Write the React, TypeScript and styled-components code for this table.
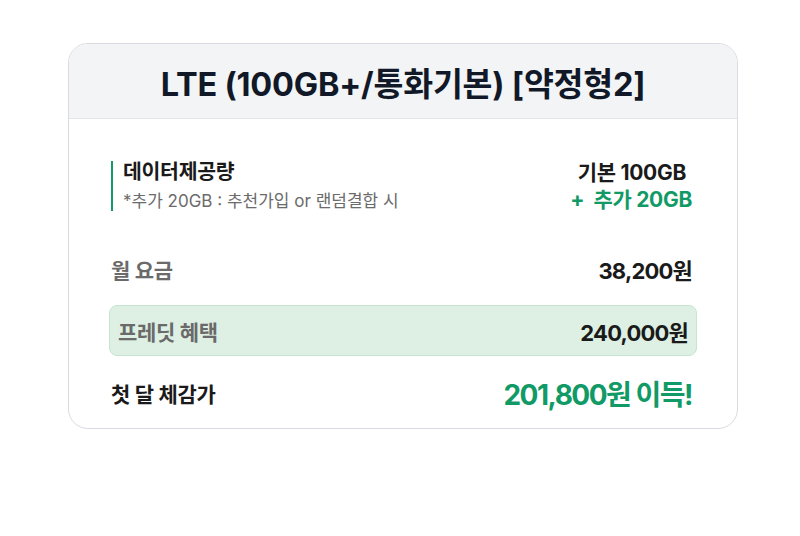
import React from "react";
import styled, { createGlobalStyle } from "styled-components";

const GlobalStyle = createGlobalStyle`
  *, *::before, *::after {
    box-sizing: border-box;
  }
  body {
    margin: 0;
    background: #ffffff;
    font-family: Inter, "Noto Sans CJK KR", sans-serif;
  }
`;

const Page = styled.div`
  padding: 43px 62px 0 68px;
`;

const Card = styled.div`
  border: 1px solid #d9dbe0;
  border-radius: 20px;
  overflow: hidden;
  background: #ffffff;
`;

const Header = styled.div`
  height: 75px;
  display: flex;
  align-items: center;
  justify-content: center;
  background: #f3f4f6;
  border-bottom: 1px solid #e2e4e8;
`;

const Title = styled.h1`
  margin: 0;
  font-size: 32.5px;
  font-weight: 700;
  letter-spacing: -0.2px;
  color: #111827;
`;

const Body = styled.div`
  padding: 41px 40px 8px;
  display: flex;
  flex-direction: column;
`;

const Row = styled.div<{ $highlight?: boolean; $height: number; $space?: number }>`
  display: flex;
  align-items: center;
  justify-content: space-between;
  height: ${(p) => p.$height}px;
  margin-top: ${(p) => p.$space ?? 0}px;
  padding: ${(p) => (p.$highlight ? "0 8px 0 8px" : "0 4px 0 1px")};
  background: ${(p) => (p.$highlight ? "#ddf0e3" : "transparent")};
  border: 1px solid ${(p) => (p.$highlight ? "#c6e5d0" : "transparent")};
  border-radius: 8px;
`;

const DataInfo = styled.div`
  border-left: 2px solid #119a66;
  padding-left: 10px;
  display: flex;
  flex-direction: column;
  gap: 8px;
`;

const DataTitle = styled.div`
  font-size: 20.5px;
  line-height: 22px;
  font-weight: 700;
  color: #1a1a1a;
  letter-spacing: -0.3px;
`;

const DataNote = styled.div`
  font-size: 17px;
  line-height: 20px;
  color: #6b6b6b;
`;

const DataValue = styled.div`
  display: flex;
  flex-direction: column;
  align-items: flex-end;
  gap: 3px;
  font-size: 21px;
  line-height: 24px;
  font-weight: 700;
  letter-spacing: -0.3px;
`;

const Base = styled.span`
  color: #1a1a1a;
  padding-right: 6px;
`;

const Extra = styled.span`
  color: #119a66;
  white-space: pre;
`;

const Label = styled.span<{ $strong?: boolean }>`
  font-size: 21px;
  font-weight: 700;
  letter-spacing: -0.3px;
  color: ${(p) => (p.$strong ? "#1a1a1a" : "#6a6a6a")};
`;

const Amount = styled.span<{ $big?: boolean }>`
  font-size: ${(p) => (p.$big ? "28px" : "22px")};
  font-weight: 700;
  letter-spacing: ${(p) => (p.$big ? "-1.5px" : "-0.8px")};
  color: ${(p) => (p.$big ? "#119a66" : "#1a1a1a")};
`;

export default function App() {
  return (
    <Page>
      <GlobalStyle />
      <Card>
        <Header>
          <Title>LTE (100GB+/통화기본) [약정형2]</Title>
        </Header>
        <Body>
          <Row $height={52}>
            <DataInfo>
              <DataTitle>데이터제공량</DataTitle>
              <DataNote>*추가 20GB : 추천가입 or 랜덤결합 시</DataNote>
            </DataInfo>
            <DataValue>
              <Base>기본 100GB</Base>
              <Extra>{"+  추가 20GB"}</Extra>
            </DataValue>
          </Row>
          <Row $height={44} $space={35}>
            <Label>월 요금</Label>
            <Amount>38,200원</Amount>
          </Row>
          <Row $highlight $height={51} $space={14}>
            <Label>프레딧 혜택</Label>
            <Amount>240,000원</Amount>
          </Row>
          <Row $height={54} $space={10}>
            <Label $strong>첫 달 체감가</Label>
            <Amount $big>201,800원 이득!</Amount>
          </Row>
        </Body>
      </Card>
    </Page>
  );
}
